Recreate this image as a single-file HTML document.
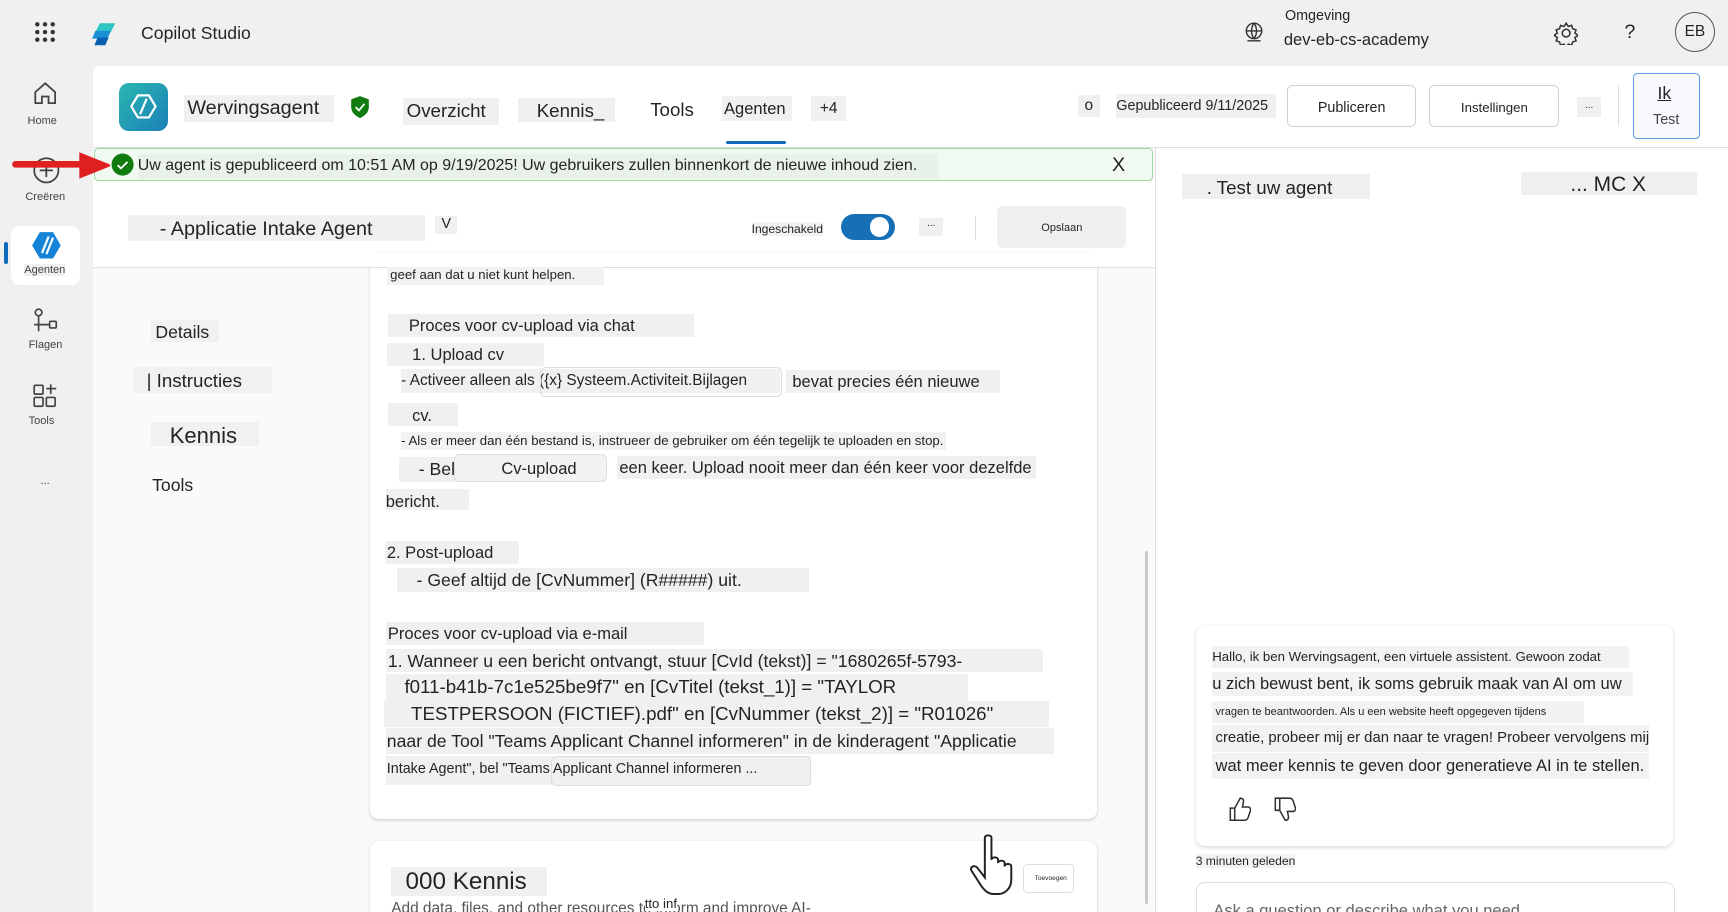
<!DOCTYPE html>
<html><head><meta charset="utf-8"><style>
html,body{margin:0;padding:0;overflow:hidden;width:1728px;height:912px;background:#f0f0f0}
#f{position:relative;width:1568px;height:828px;zoom:1.10204;font-family:"Liberation Sans","DejaVu Sans",sans-serif;color:#242424;overflow:hidden;background:#f0f0f0}
.a{position:absolute;white-space:nowrap}
.h{background:#f0f0f0}
.sm{font-size:10px;color:#424242}
</style></head><body><div id="f">
<!-- top bar -->
<svg class="a" style="left:31px;top:19px" width="20" height="20"><g fill="#333"><circle cx="3" cy="3" r="2"/><circle cx="10" cy="3" r="2"/><circle cx="17" cy="3" r="2"/><circle cx="3" cy="10" r="2"/><circle cx="10" cy="10" r="2"/><circle cx="17" cy="10" r="2"/><circle cx="3" cy="17" r="2"/><circle cx="10" cy="17" r="2"/><circle cx="17" cy="17" r="2"/></g></svg>
<svg class="a" style="left:83px;top:19px" width="26" height="24"><path d="M8 2h14l-4 8H4z" fill="#2fc4c4"/><path d="M4 9h14l-3 7H1z" fill="#1a8fd6"/><path d="M6 15h10l-3 7H3z" fill="#0a5fb0"/></svg>
<div class="a h" style="left:118px;top:19px;width:128px;height:23px;font-size:16px;line-height:23px;padding-left:10px;box-sizing:border-box">Copilot Studio</div>
<svg class="a" style="left:1128px;top:19px" width="20" height="20" fill="none" stroke="#333" stroke-width="1.3"><circle cx="10" cy="9" r="7"/><path d="M3 9h14M10 2c-3 4-3 10 0 14M10 2c3 4 3 10 0 14M4 18h12"/></svg>
<div class="a h" style="left:1166px;top:7px;width:78px;height:16px;font-size:13px;line-height:16px">Omgeving</div>
<div class="a h" style="left:1165px;top:25px;width:154px;height:20px;font-size:15px;line-height:22px">dev-eb-cs-academy</div>
<svg class="a" style="left:1410px;top:19px" width="22" height="22" fill="none" stroke="#333" stroke-width="1.4"><circle cx="11" cy="11" r="3.5"/><path d="M11 2l2 3 3-1 1 3 3 1-1 3 3 2-3 2 1 3-3 1-1 3-3-1-2 3-2-3-3 1-1-3-3-1 1-3-3-2 3-2-1-3 3-1 1-3 3 1z"/></svg>
<div class="a h" style="left:1470px;top:19px;width:18px;height:22px;font-size:18px;text-align:center">?</div>
<div class="a" style="left:1520px;top:11px;width:36px;height:36px;border:1px solid #555;border-radius:50%;box-sizing:border-box;font-size:14px;line-height:34px;text-align:center">EB</div>
<!-- left rail -->
<svg class="a" style="left:29px;top:73px" width="24" height="24" fill="none" stroke="#424242" stroke-width="1.6"><path d="M3 11L12 3l9 8v10h-6v-6H9v6H3z"/></svg>
<div class="a sm h" style="left:25px;top:104px;font-size:10px">Home</div>
<svg class="a" style="left:29px;top:142px" width="26" height="26" fill="none" stroke="#424242" stroke-width="1.6"><circle cx="13" cy="13" r="11"/><path d="M13 7v12M7 13h12"/></svg>
<div class="a sm h" style="left:23px;top:173px">Creëren</div>
<div class="a" style="left:10px;top:205px;width:63px;height:54px;background:#fff;border-radius:8px"></div>
<div class="a" style="left:4px;top:220px;width:3px;height:20px;background:#0f6cbd;border-radius:2px"></div>
<svg class="a" style="left:28px;top:210px" width="28" height="26"><path d="M8 1h12l7 12-7 12H8L1 13z" fill="#1584d8"/><path d="M10 20L16 5M14 21l6-15" stroke="#fff" stroke-width="2"/></svg>
<div class="a sm h" style="left:22px;top:240px">Agenten</div>
<svg class="a" style="left:29px;top:279px" width="26" height="26" fill="none" stroke="#424242" stroke-width="1.5"><circle cx="6" cy="5" r="3"/><rect x="16" y="13" width="6" height="6" rx="1"/><path d="M6 8v14M2 16h14"/></svg>
<div class="a sm h" style="left:26px;top:308px">Flagen</div>
<svg class="a" style="left:29px;top:347px" width="26" height="26" fill="none" stroke="#424242" stroke-width="1.5"><rect x="2" y="3" width="8" height="8" rx="1"/><rect x="2" y="14" width="8" height="8" rx="1"/><rect x="13" y="14" width="8" height="8" rx="1"/><path d="M17 2v9M13 6h9"/></svg>
<div class="a sm h" style="left:26px;top:377px">Tools</div>
<div class="a sm h" style="left:30px;top:431px;width:22px;text-align:center">...</div>
<!-- header row -->
<div class="a" style="left:84px;top:60px;width:1484px;height:73px;background:#fff;border-bottom:1px solid #e0e0e0;border-top-left-radius:6px"></div>
<div class="a" style="left:108px;top:75px;width:44px;height:44px;border-radius:9px;background:linear-gradient(135deg,#2ab7b0,#1b7fb8)"></div>
<svg class="a" style="left:116px;top:83px" width="28" height="28" fill="none" stroke="#fff" stroke-width="2"><path d="M9 4h10l6 10-6 10H9L3 14z"/><path d="M11 21l6-14"/></svg>
<div class="a h" style="left:167px;top:86px;width:133px;height:25px;font-size:18px;line-height:25px;padding-left:3px">Wervingsagent</div>
<svg class="a" style="left:317px;top:86px" width="20" height="22"><path d="M10 1l8 3v7c0 5-4 8-8 10-4-2-8-5-8-10V4z" fill="#107c10"/><path d="M6 11l3 3 5-6" stroke="#fff" stroke-width="1.6" fill="none"/></svg>
<div class="a h" style="left:366px;top:89px;width:84px;height:24px;font-size:17px;line-height:24px;padding-left:3px">Overzicht</div>
<div class="a h" style="left:470px;top:89px;width:88px;height:22px;font-size:17px;line-height:24px;padding-left:17px;box-sizing:border-box">Kennis_</div>
<div class="a" style="left:590px;top:89px;font-size:17px;line-height:22px">Tools</div>
<div class="a h" style="left:655px;top:87px;width:62px;height:23px;font-size:15px;line-height:23px;padding-left:2px">Agenten</div>
<div class="a" style="left:659px;top:128px;width:54px;height:3px;background:#0f6cbd;border-radius:2px"></div>
<div class="a h" style="left:736px;top:87px;width:32px;height:23px;font-size:14px;line-height:23px;text-align:center">+4</div>
<div class="a h" style="left:978px;top:86px;width:20px;height:20px;font-size:14px;text-align:center;line-height:20px">o</div>
<div class="a h" style="left:1013px;top:85px;width:145px;height:22px;font-size:13px;line-height:22px">Gepubliceerd 9/11/2025</div>
<div class="a" style="left:1168px;top:77px;width:117px;height:38px;border:1px solid #d1d1d1;border-radius:5px;box-sizing:border-box;font-size:13px;line-height:40px;text-align:center">Publiceren</div>
<div class="a" style="left:1297px;top:77px;width:118px;height:38px;border:1px solid #d1d1d1;border-radius:5px;box-sizing:border-box;font-size:12px;line-height:40px;text-align:center">Instellingen</div>
<div class="a h" style="left:1431px;top:88px;width:22px;height:18px;font-size:9px;text-align:center;line-height:16px">...</div>
<div class="a" style="left:1468px;top:78px;width:1px;height:36px;background:#ddd"></div>
<div class="a" style="left:1482px;top:66px;width:61px;height:60px;border:1px solid #5a9be0;border-radius:4px;box-sizing:border-box;background:#f7f9fc"></div>
<div class="a" style="left:1504px;top:75px;font-size:16px;text-decoration:underline">Ik</div>
<div class="a" style="left:1500px;top:102px;font-size:13px;color:#444">Test</div>
<!-- main -->
<div class="a" style="left:84px;top:134px;width:964px;height:694px;background:#fafafa"></div>
<div class="a" style="left:84px;top:164px;width:964px;height:78px;background:#fff;border-bottom:1px solid #e0e0e0"></div>
<div class="a" style="left:1048px;top:134px;width:520px;height:694px;background:#fff;border-left:1px solid #e0e0e0"></div>
<!-- banner -->
<div class="a" style="left:85px;top:134px;width:961px;height:30px;background:#f1faf1;border:1px solid #9fd89f;border-radius:4px;box-sizing:border-box"></div>
<svg class="a" style="left:101px;top:139px" width="21" height="21"><circle cx="10.5" cy="10.5" r="10" fill="#107c10"/><path d="M6 11l3 3 6-6" stroke="#fff" stroke-width="1.6" fill="none"/></svg>
<div class="a" style="left:125px;top:140px;width:726px;height:22px;background:#e8f2e8;font-size:14.5px;line-height:21px;overflow:hidden">Uw agent is gepubliceerd om 10:51 AM op 9/19/2025! Uw gebruikers zullen binnenkort de nieuwe inhoud zien.</div>
<div class="a" style="left:1009px;top:140px;font-size:18px">X</div>
<svg class="a" style="left:10px;top:136px" width="90" height="28"><path d="M4 13h60" stroke="#e02020" stroke-width="6" stroke-linecap="round"/><path d="M62 2l30 12-30 12z" fill="#e02020"/></svg>
<!-- subheader -->
<div class="a h" style="left:116px;top:195px;width:270px;height:24px;font-size:18px;line-height:26px;padding-left:29px;box-sizing:border-box">- Applicatie Intake Agent</div>
<div class="a h" style="left:395px;top:196px;width:20px;height:16px;font-size:13px;text-align:center">V</div>
<div class="a" style="left:682px;top:201px;font-size:11px;background:#f2f2f2">Ingeschakeld</div>
<div class="a" style="left:763px;top:194px;width:49px;height:24px;background:#1570b5;border-radius:12px"></div>
<div class="a" style="left:789px;top:197px;width:18px;height:18px;background:#fff;border-radius:50%"></div>
<div class="a h" style="left:834px;top:198px;width:22px;height:16px;font-size:9px;text-align:center">...</div>
<div class="a" style="left:885px;top:196px;width:1px;height:22px;background:#ddd"></div>
<div class="a" style="left:905px;top:187px;width:117px;height:38px;background:#f0f0f0;border-radius:5px;font-size:10px;line-height:40px;text-align:center">Opslaan</div>
<!-- left nav -->
<div class="a h" style="left:137px;top:290px;width:62px;height:20px;font-size:16px;line-height:22px;padding-left:4px;box-sizing:border-box;background:#f1f1f1">Details</div>
<div class="a h" style="left:121px;top:333px;width:126px;height:24px;font-size:17px;line-height:26px;padding-left:12px;box-sizing:border-box;background:#f1f1f1">| Instructies</div>
<div class="a h" style="left:137px;top:383px;width:98px;height:22px;font-size:20px;line-height:26px;padding-left:17px;box-sizing:border-box;background:#f1f1f1">Kennis</div>
<div class="a" style="left:138px;top:431px;font-size:16px">Tools</div>
<!-- card -->
<div class="a" style="left:336px;top:230px;width:659px;height:513px;background:#fff;border-radius:8px;box-shadow:0 1px 3px rgba(0,0,0,.18)"></div>
<div class="a" style="left:84px;top:230px;width:964px;height:12px;background:#fff"></div>
<div class="a" style="left:84px;top:242px;width:964px;height:1px;background:#e0e0e0"></div>
<div style="font-size:15px">
<div class="a h" style="left:351px;top:242px;width:194px;height:17px;font-size:12px;line-height:14px;padding-left:3px;background:#f2f2f2">geef aan dat u niet kunt helpen.</div>
<div class="a h" style="left:352px;top:285px;width:278px;height:21px;line-height:22px;padding-left:19px;box-sizing:border-box">Proces voor cv-upload via chat</div>
<div class="a h" style="left:351px;top:311px;width:143px;height:21px;line-height:22px;padding-left:23px;box-sizing:border-box">1. Upload cv</div>
<div class="a h" style="left:364px;top:335px;width:344px;height:22px;font-size:14px;line-height:22px">- Activeer alleen als ({x} Systeem.Activiteit.Bijlagen</div>
<div class="a" style="left:490px;top:333px;width:218px;height:25px;border:1px solid #ddd;border-radius:5px"></div>
<div class="a h" style="left:713px;top:336px;width:194px;height:21px;line-height:22px;padding-left:6px;box-sizing:border-box">bevat precies één nieuwe</div>
<div class="a h" style="left:352px;top:366px;width:64px;height:21px;line-height:24px;padding-left:22px;box-sizing:border-box">cv.</div>
<div class="a" style="left:364px;top:392px;font-size:12px;line-height:16px;background:#f2f2f2;padding-right:2px">- Als er meer dan één bestand is, instrueer de gebruiker om één tegelijk te uploaden en stop.</div>
<div class="a h" style="left:362px;top:415px;width:60px;height:22px;line-height:22px;padding-left:18px;box-sizing:border-box;font-size:16px">- Bel</div>
<div class="a" style="left:412px;top:412px;width:139px;height:25px;border:1px solid #ddd;border-radius:5px;background:#f2f2f2;font-size:15px;line-height:25px;padding-left:42px;box-sizing:border-box">Cv-upload</div>
<div class="a h" style="left:560px;top:414px;width:378px;height:21px;line-height:21px;padding-left:2px;overflow:hidden">een keer. Upload nooit meer dan één keer voor dezelfde</div>
<div class="a h" style="left:350px;top:444px;width:76px;height:19px;line-height:24px">bericht.</div>
<div class="a h" style="left:349px;top:491px;width:120px;height:21px;line-height:22px;padding-left:2px">2. Post-upload</div>
<div class="a h" style="left:360px;top:515px;width:374px;height:22px;font-size:16px;line-height:22px;padding-left:18px;box-sizing:border-box">- Geef altijd de [CvNummer] (R#####) uit.</div>
<div class="a h" style="left:350px;top:564px;width:287px;height:21px;line-height:22px;padding-left:2px">Proces voor cv-upload via e-mail</div>
<div class="a h" style="left:350px;top:589px;width:594px;height:21px;font-size:16px;line-height:22px;padding-left:2px">1. Wanneer u een bericht ontvangt, stuur [CvId (tekst)] = "1680265f-5793-</div>
<div class="a h" style="left:350px;top:612px;width:528px;height:24px;font-size:17px;line-height:24px;padding-left:17px;box-sizing:border-box">f011-b41b-7c1e525be9f7" en [CvTitel (tekst_1)] = "TAYLOR</div>
<div class="a h" style="left:348px;top:636px;width:604px;height:24px;font-size:17px;line-height:24px;padding-left:25px;box-sizing:border-box">TESTPERSOON (FICTIEF).pdf" en [CvNummer (tekst_2)] = "R01026"</div>
<div class="a h" style="left:350px;top:661px;width:605px;height:23px;font-size:16px;line-height:24px;padding-left:1px">naar de Tool "Teams Applicant Channel informeren" in de kinderagent "Applicatie</div>
<div class="a h" style="left:350px;top:686px;width:385px;height:26px;font-size:13px;line-height:24px;padding-left:1px">Intake Agent", bel "Teams Applicant Channel informeren ...</div>
<div class="a" style="left:500px;top:686px;width:234px;height:25px;border:1px solid #ddd;border-radius:5px"></div>
</div>
<!-- second card -->
<div class="a" style="left:336px;top:763px;width:659px;height:80px;background:#fff;border-radius:8px;box-shadow:0 1px 3px rgba(0,0,0,.18)"></div>
<div class="a h" style="left:355px;top:787px;width:141px;height:26px;font-size:22px;line-height:28px;padding-left:13px;box-sizing:border-box">000 Kennis</div>
<div class="a" style="left:355px;top:817px;font-size:14px;color:#555">Add data, files, and other resources to inform and improve AI-</div>
<div class="a" style="left:585px;top:813px;font-size:12px;background:#fff">tto inf</div>
<div class="a" style="left:928px;top:784px;width:47px;height:26px;border:1px solid #ddd;border-radius:4px;font-size:6px;line-height:26px;text-align:right;padding-right:6px;box-sizing:border-box">Toevoegen</div>
<svg class="a" style="left:876px;top:752px" width="52" height="62" fill="#fff" stroke="#222" stroke-width="1.8"><path d="M18 44V8c0-3 6-3 6 0v20c0-3 6-3 6 0v3c0-3 6-3 6 0v3c0-3 6-3 6 0v12c0 7-5 13-12 13h-4c-5 0-8-3-11-7L6 38c-2-3 2-6 5-3l7 9z"/></svg>
<div class="a" style="left:1039px;top:500px;width:3px;height:320px;background:#c8c8c8;border-radius:2px"></div>
<!-- right panel -->
<div class="a h" style="left:1073px;top:158px;width:170px;height:23px;font-size:17px;line-height:25px;padding-left:22px;box-sizing:border-box;background:#efefef">. Test uw agent</div>
<div class="a h" style="left:1380px;top:156px;width:160px;height:21px;font-size:19px;line-height:24px;padding-left:45px;box-sizing:border-box;background:#efefef">... MC X</div>
<div class="a" style="left:1085px;top:568px;width:433px;height:200px;background:#fff;border-radius:8px;box-shadow:0 1px 4px rgba(0,0,0,.16)"></div>
<div class="a h" style="left:1100px;top:586px;width:378px;height:20px;font-size:12px;line-height:20px;background:#f2f2f2">Hallo, ik ben Wervingsagent, een virtuele assistent. Gewoon zodat</div>
<div class="a h" style="left:1100px;top:610px;width:382px;height:22px;font-size:15px;line-height:22px;background:#f2f2f2">u zich bewust bent, ik soms gebruik maak van AI om uw</div>
<div class="a h" style="left:1100px;top:636px;width:334px;height:20px;font-size:10px;line-height:20px;padding-left:3px;background:#f2f2f2">vragen te beantwoorden. Als u een website heeft opgegeven tijdens</div>
<div class="a h" style="left:1100px;top:658px;width:393px;height:24px;font-size:13.5px;line-height:24px;padding-left:3px;background:#f2f2f2;overflow:hidden">creatie, probeer mij er dan naar te vragen! Probeer vervolgens mij</div>
<div class="a h" style="left:1100px;top:683px;width:393px;height:24px;font-size:15px;line-height:24px;padding-left:3px;background:#f2f2f2">wat meer kennis te geven door generatieve AI in te stellen.</div>
<svg class="a" style="left:1113px;top:722px" width="22" height="24" fill="none" stroke="#333" stroke-width="1.4"><path d="M3 11h4v11H3zM7 11l5-9c2 0 3 1 3 3l-1 5h5c2 0 3 2 2 4l-2 6c-1 2-2 2-4 2H7"/></svg>
<svg class="a" style="left:1154px;top:722px" width="22" height="24" fill="none" stroke="#333" stroke-width="1.4"><path d="M3 2h4v11H3zM7 13l5 9c2 0 3-1 3-3l-1-5h5c2 0 3-2 2-4l-2-6c-1-2-2-2-4-2H7"/></svg>
<div class="a" style="left:1085px;top:775px;font-size:11px;background:#f2f2f2">3 minuten geleden</div>
<div class="a" style="left:1085px;top:800px;width:433px;height:40px;border:1px solid #ddd;border-radius:8px;background:#fff"></div>
<div class="a" style="left:1101px;top:818px;font-size:15px;color:#666">Ask a question or describe what you need</div>
</div></body></html>
